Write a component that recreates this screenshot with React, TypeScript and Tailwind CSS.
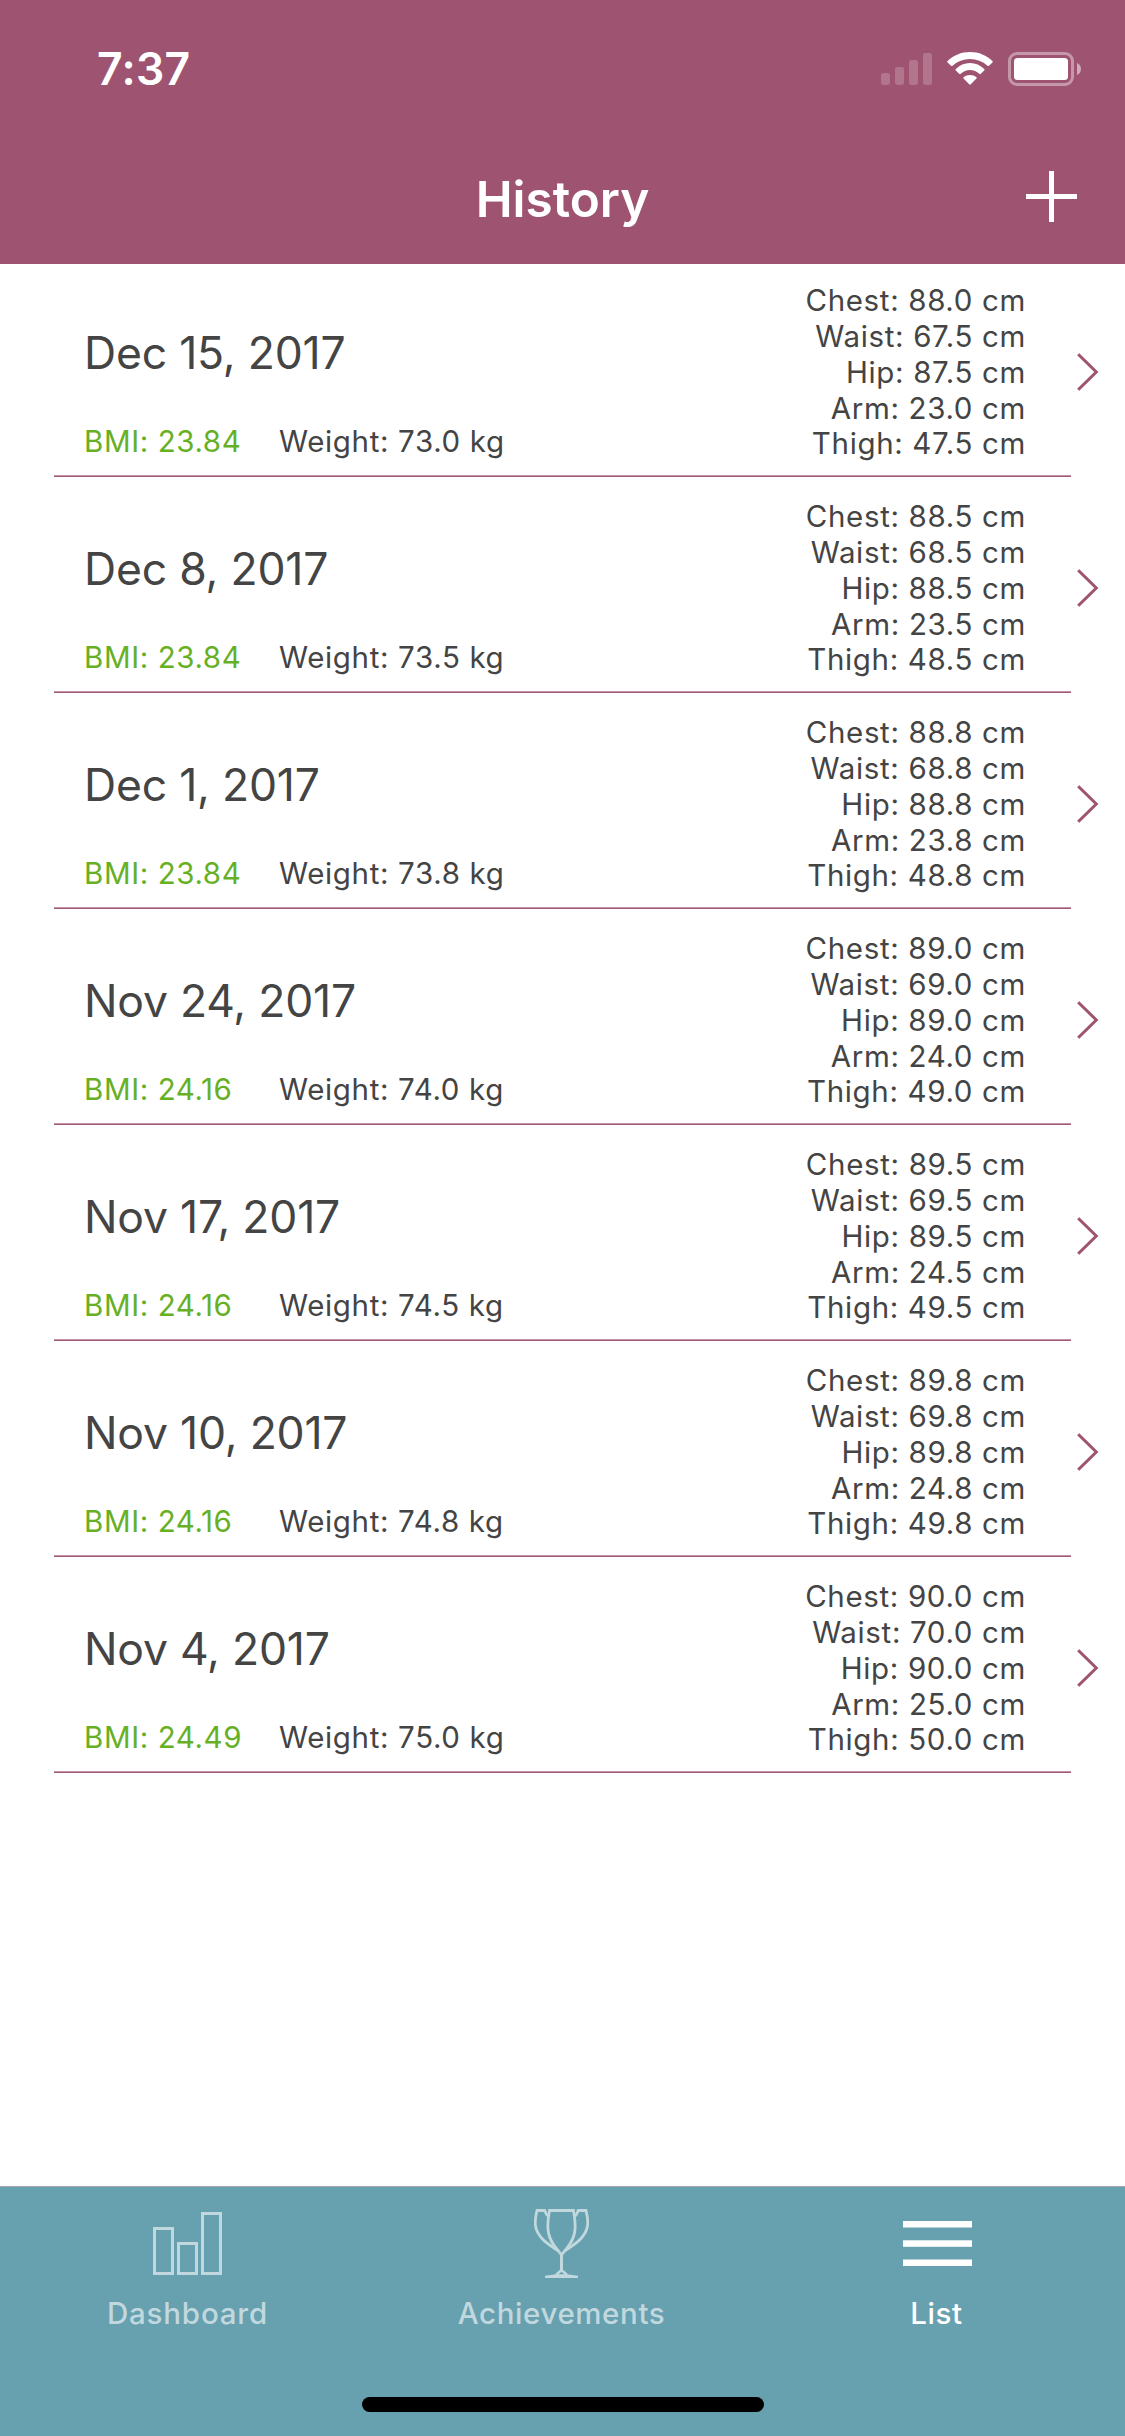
import React from 'react';

interface Entry {
  date: string;
  bmi: string;
  weight: string;
  chest: string;
  waist: string;
  hip: string;
  arm: string;
  thigh: string;
}

const entries: Entry[] = [
  { date: 'Dec 15, 2017', bmi: '23.84', weight: '73.0', chest: '88.0', waist: '67.5', hip: '87.5', arm: '23.0', thigh: '47.5' },
  { date: 'Dec 8, 2017', bmi: '23.84', weight: '73.5', chest: '88.5', waist: '68.5', hip: '88.5', arm: '23.5', thigh: '48.5' },
  { date: 'Dec 1, 2017', bmi: '23.84', weight: '73.8', chest: '88.8', waist: '68.8', hip: '88.8', arm: '23.8', thigh: '48.8' },
  { date: 'Nov 24, 2017', bmi: '24.16', weight: '74.0', chest: '89.0', waist: '69.0', hip: '89.0', arm: '24.0', thigh: '49.0' },
  { date: 'Nov 17, 2017', bmi: '24.16', weight: '74.5', chest: '89.5', waist: '69.5', hip: '89.5', arm: '24.5', thigh: '49.5' },
  { date: 'Nov 10, 2017', bmi: '24.16', weight: '74.8', chest: '89.8', waist: '69.8', hip: '89.8', arm: '24.8', thigh: '49.8' },
  { date: 'Nov 4, 2017', bmi: '24.49', weight: '75.0', chest: '90.0', waist: '70.0', hip: '90.0', arm: '25.0', thigh: '50.0' },
];

const SignalIcon = () => (
  <svg width="51" height="32" viewBox="0 0 51 32" fill="#fff" fillOpacity="0.2">
    <rect x="0" y="20" width="9" height="12" rx="2.4" />
    <rect x="14" y="14" width="9" height="18" rx="2.4" />
    <rect x="28" y="7" width="9" height="25" rx="2.4" />
    <rect x="42" y="0" width="9" height="32" rx="2.4" />
  </svg>
);

const WifiIcon = () => (
  <svg width="46" height="33" viewBox="0 0 46 33" fill="#fff">
    <path d="M23 0C32 0 39.6 3.4 45.4 9Q46.2 9.8 45.4 10.6L42 13.8Q41.3 14.4 40.5 13.7C35.6 9.3 29.6 7 23 7C16.4 7 10.4 9.3 5.5 13.7Q4.7 14.4 4 13.8L.6 10.6Q-.2 9.8 .6 9C6.4 3.4 14 0 23 0Z" />
    <path d="M23 11C28.6 11 33.3 13.2 37.2 16.9Q38 17.7 37.2 18.5L33.8 21.8Q33.1 22.5 32.3 21.8C29.7 19.4 26.6 18 23 18C19.4 18 16.3 19.4 13.7 21.8Q12.9 22.5 12.2 21.8L8.8 18.5Q8 17.7 8.8 16.9C12.7 13.2 17.4 11 23 11Z" />
    <path d="M23 23C25.5 23 27.6 23.8 29.3 25.1Q30.1 25.8 29.4 26.6L23.8 32.3Q23 33 22.2 32.3L16.6 26.6Q15.9 25.8 16.7 25.1C18.4 23.8 20.5 23 23 23Z" />
  </svg>
);

const BatteryIcon = () => (
  <svg width="73" height="34" viewBox="0 0 73 34" fill="none">
    <rect x="1.5" y="1.5" width="63" height="31" rx="7.5" stroke="#fff" strokeOpacity="0.4" strokeWidth="3" />
    <rect x="6" y="6" width="54" height="22" rx="3.5" fill="#fff" />
    <path d="M69 11C71.5 12 73 14.3 73 17C73 19.7 71.5 22 69 23Z" fill="#fff" fillOpacity="0.5" />
  </svg>
);

const ChevronIcon = () => (
  <svg width="22" height="38" viewBox="0 0 22 38" fill="none" stroke="#9e5470" strokeWidth="3">
    <path d="M1.2 1.2L19.3 19L1.2 36.8" />
  </svg>
);

const DashboardIcon = () => (
  <svg width="69" height="63" viewBox="0 0 69 63" fill="none" stroke="currentColor" strokeWidth="3">
    <rect x="1.5" y="16.5" width="18" height="45" />
    <rect x="25.5" y="31.5" width="18" height="30" />
    <rect x="49.5" y="1.5" width="18" height="60" />
  </svg>
);

const TrophyIcon = () => (
  <svg width="55" height="69" viewBox="0 0 55 69" fill="none" stroke="currentColor" strokeWidth="2.8">
    <path d="M15.5 1.5H39.5C42.3 17 42 26 35.5 35.5L27.5 46L19.5 35.5C13 26 12.7 17 15.5 1.5Z" />
    <path d="M14 7L12.4 5.2L10.8 1.5H3C-.2 14 .6 21 8 29.5C12.5 34.5 18 37.5 24.5 42" />
    <path d="M41 7L42.6 5.2L44.2 1.5H52C55.2 14 54.4 21 47 29.5C42.5 34.5 37 37.5 30.5 42" />
    <path d="M27.500 45V62" strokeWidth="3" />
    <path d="M27.500 61L22 66M27.500 61L33 66" strokeWidth="2.500" />
    <path d="M11 66.700L22 65.200H33L44 66.700V69H11Z" fill="currentColor" stroke="none" />
  </svg>
);

const ListIcon = () => (
  <svg width="69" height="46" viewBox="0 0 69 46" fill="currentColor">
    <rect y="0" width="69" height="6.5" />
    <rect y="19.3" width="69" height="6.5" />
    <rect y="38.5" width="69" height="6.5" />
  </svg>
);

const StatusBar = () => (
  <div className="flex h-[132px] items-start justify-between pl-[97px] pr-[44px]">
    <span className="mt-[42px] text-[44.5px] leading-[54px] font-semibold tracking-[0.3px]">7:37</span>
    <div className="flex items-start">
      <div className="mt-[53px]"><SignalIcon /></div>
      <div className="mt-[52px] ml-[15px]"><WifiIcon /></div>
      <div className="mt-[52px] ml-[15px]"><BatteryIcon /></div>
    </div>
  </div>
);

const NavBar = () => (
  <div className="grid h-[132px] grid-cols-[1fr_auto_1fr] items-start">
    <h1 className="col-start-2 mt-[37px] text-[49.5px] leading-[60px] font-semibold">History</h1>
    <button className="mt-[39px] mr-[48px] justify-self-end" aria-label="Add entry">
      <svg width="51" height="51" viewBox="0 0 51 51" stroke="#fff" strokeWidth="5">
        <path d="M25.5 0V51M0 25.5H51" />
      </svg>
    </button>
  </div>
);

const HistoryRow: React.FC<{ entry: Entry }> = ({ entry }) => (
  <li className="flex h-[216px] flex-col justify-end first:h-[213px]">
    <div className="flex items-end pr-[26px] pl-[84px] text-[29.5px] leading-9 tracking-[0.65px]">
      <div className="flex-1 pb-[16px]">
        <p className="mb-[43px] text-[44.5px] leading-[54px] tracking-[-0.2px]">{entry.date}</p>
        <div className="flex">
          <span className="w-[195px] tracking-[0.6px] text-[#67b024]">BMI: {entry.bmi}</span>
          <span>Weight: {entry.weight} kg</span>
        </div>
      </div>
      <div className="pb-[14px] text-right">
        <p>Chest: {entry.chest} cm</p>
        <p>Waist: {entry.waist} cm</p>
        <p>Hip: {entry.hip} cm</p>
        <p>Arm: {entry.arm} cm</p>
        <p className="leading-[35px]">Thigh: {entry.thigh} cm</p>
      </div>
      <div className="ml-[51px] pb-[84px]"><ChevronIcon /></div>
    </div>
    <div className="mx-[54px] h-[2px] border-t border-[#c295a5] bg-[#a5577a]" />
  </li>
);

const TabBar = () => (
  <nav className="grid h-[250px] grid-cols-3 border-t border-[#a5a5a8] bg-[#67a0af] text-[29.5px] leading-9 font-medium tracking-[0.6px] text-[#c0d8de]">
    <div className="flex flex-col items-center pt-[25px]">
      <DashboardIcon />
      <span className="mt-[20px] tracking-[0.8px]">Dashboard</span>
    </div>
    <div className="flex flex-col items-center pt-[22px] pr-[2px]">
      <TrophyIcon />
      <span className="mt-[17px]">Achievements</span>
    </div>
    <div className="flex flex-col items-center pt-[34px] text-white">
      <ListIcon />
      <span className="mt-[28px] pr-[2px]">List</span>
    </div>
  </nav>
);

export default function App() {
  return (
    <div className="relative flex h-[2436px] w-[1125px] flex-col bg-white font-['Inter',sans-serif] text-[#444444]">
      <header className="h-[264px] bg-[#9e5470] text-white">
        <StatusBar />
        <NavBar />
      </header>
      <ul className="flex-1">
        {entries.map((entry) => (
          <HistoryRow key={entry.date} entry={entry} />
        ))}
      </ul>
      <TabBar />
      <div className="absolute bottom-[24px] left-[362px] h-[15px] w-[402px] rounded-full bg-black" />
    </div>
  );
}
